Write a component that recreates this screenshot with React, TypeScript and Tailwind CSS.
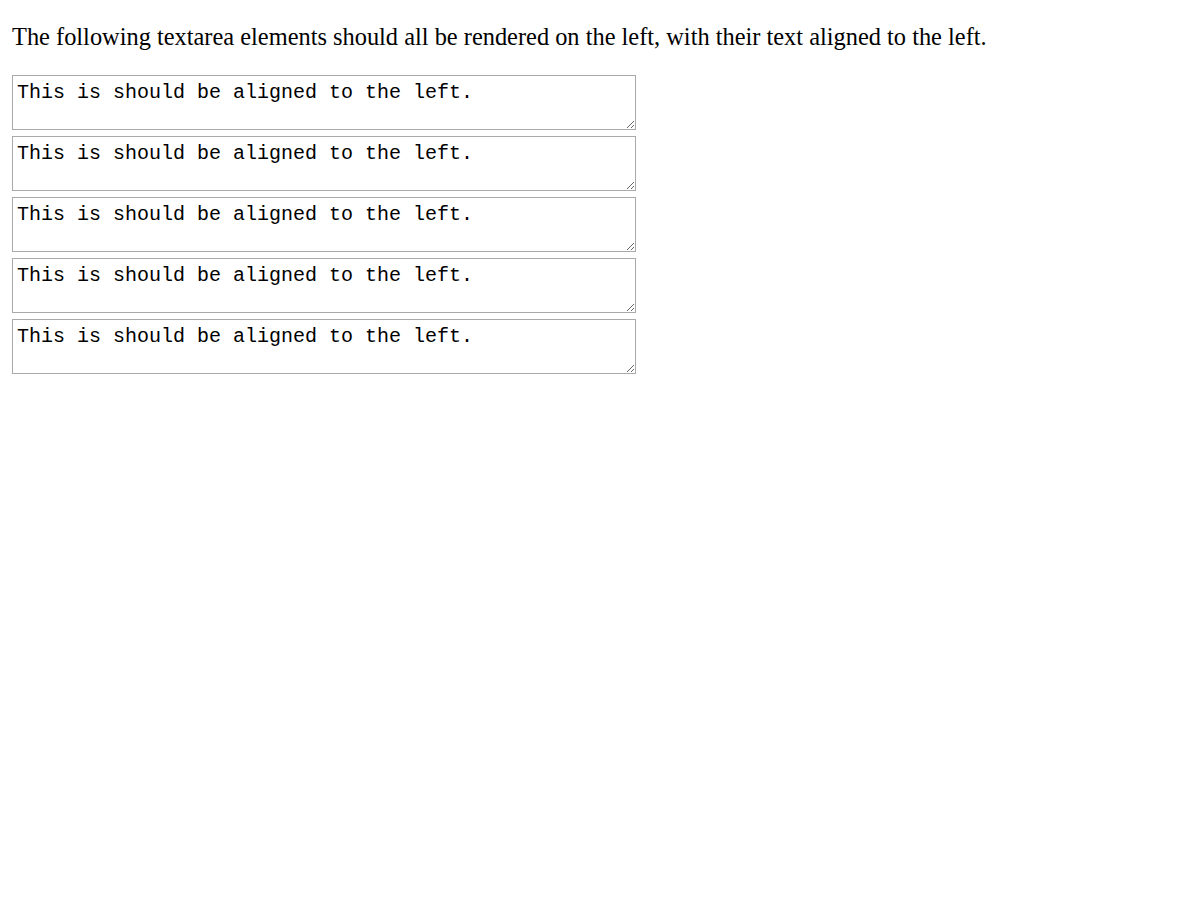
export default function App() {
  const rows = [0, 1, 2, 3, 4]

  return (
    <div className="bg-white min-h-screen p-[12px] text-black">
      <p className="mt-[11px] mb-[25px] text-[24.4px] leading-[27px] font-['Liberation_Serif',serif]">
        The following textarea elements should all be rendered on the left, with their text aligned to the left.
      </p>
      <div className="flex flex-col items-start gap-[6px]">
        {rows.map((i) => (
          <textarea
            key={i}
            defaultValue="This is should be aligned to the left."
            className="block w-[624px] h-[55px] border border-[#a9a9a9] px-[4px] pt-[5px] text-left text-[20px] leading-[23px] font-['Liberation_Mono',monospace] text-black bg-white outline-none resize"
          />
        ))}
      </div>
    </div>
  )
}
